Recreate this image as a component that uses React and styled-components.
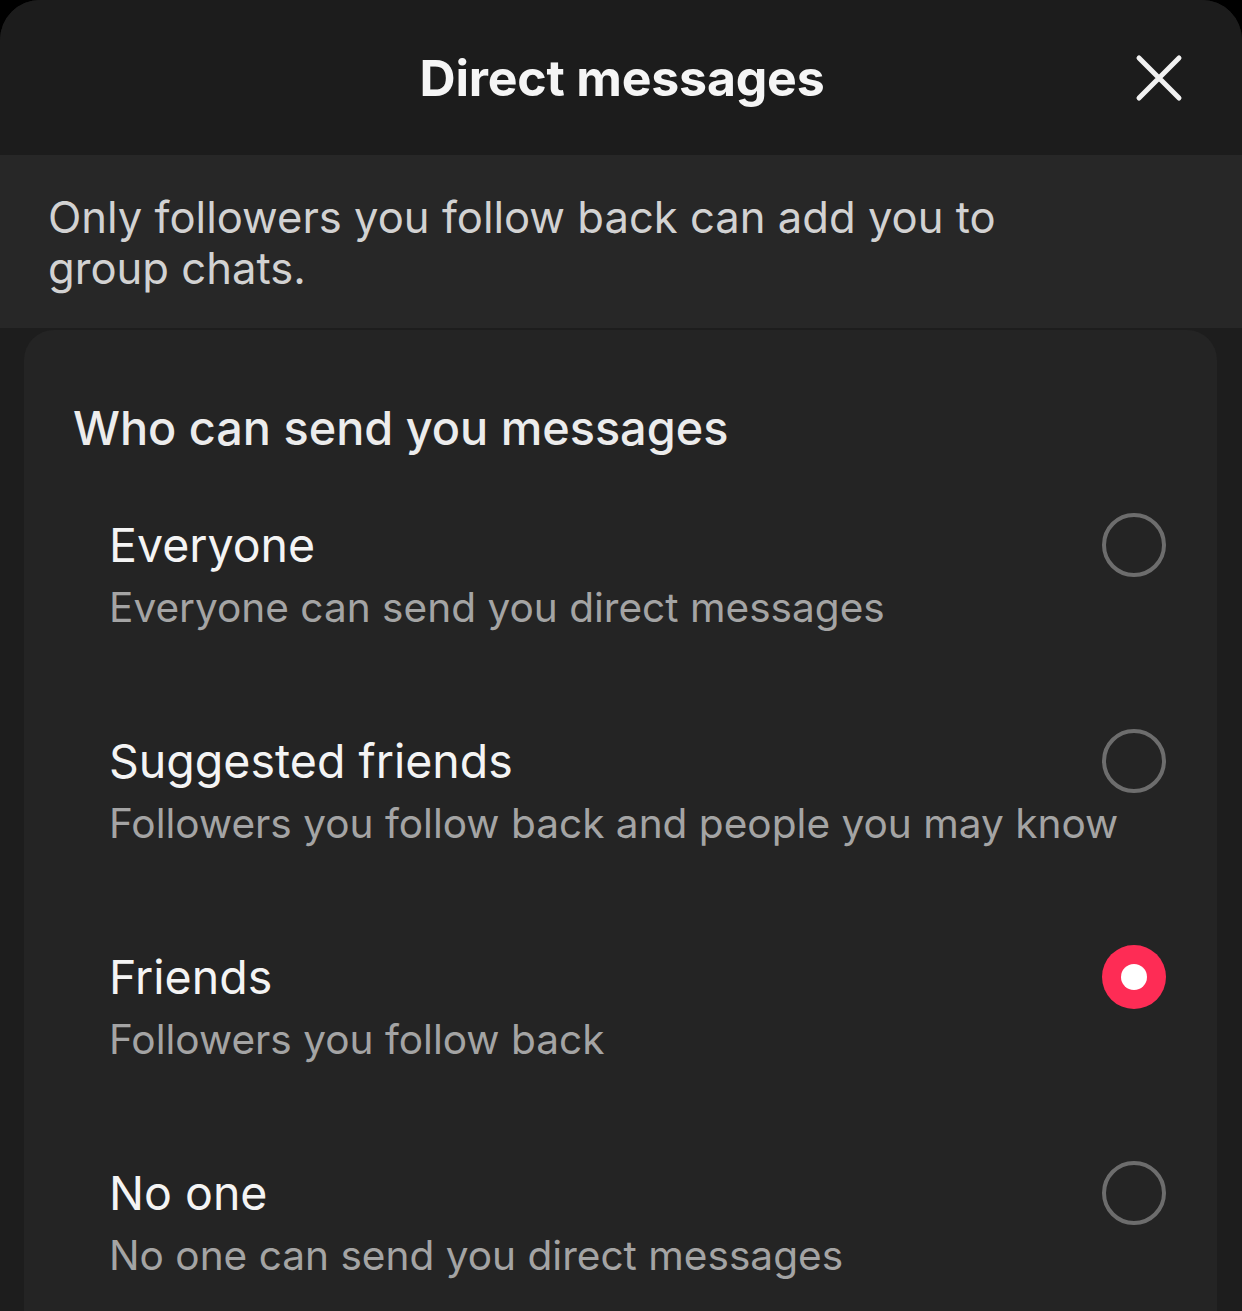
import styled, { createGlobalStyle } from "styled-components";

const GlobalStyle = createGlobalStyle`
  html, body {
    margin: 0;
    padding: 0;
    background: #000;
  }
  * {
    box-sizing: border-box;
  }
`;

const options = [
  {
    id: "everyone",
    title: "Everyone",
    description: "Everyone can send you direct messages",
  },
  {
    id: "suggested",
    title: "Suggested friends",
    description: "Followers you follow back and people you may know",
  },
  {
    id: "friends",
    title: "Friends",
    description: "Followers you follow back",
  },
  {
    id: "none",
    title: "No one",
    description: "No one can send you direct messages",
  },
];

const CloseIcon = () => (
  <svg width="48" height="48" viewBox="0 0 48 48" fill="none">
    <path
      d="M4 4 L44 44 M44 4 L4 44"
      stroke="#f2f2f2"
      strokeWidth="5"
      strokeLinecap="round"
    />
  </svg>
);

const OptionRow = ({ option, selected }) => (
  <Row>
    <OptionTitle>{option.title}</OptionTitle>
    <Radio $selected={selected}>{selected && <RadioDot />}</Radio>
    <OptionDescription>{option.description}</OptionDescription>
  </Row>
);

export default function App() {
  const selected = "friends";

  return (
    <>
      <GlobalStyle />
      <Sheet>
        <Header>
          <span />
          <Title>Direct messages</Title>
          <CloseButton aria-label="Close">
            <CloseIcon />
          </CloseButton>
        </Header>
        <Notice>
          Only followers you follow back can add you to
          <br />
          group chats.
        </Notice>
        <Card>
          <SectionHeading>Who can send you messages</SectionHeading>
          <OptionList>
            {options.map((option) => (
              <OptionRow
                key={option.id}
                option={option}
                selected={option.id === selected}
              />
            ))}
          </OptionList>
        </Card>
      </Sheet>
    </>
  );
}

const Sheet = styled.div`
  height: 1311px;
  overflow: hidden;
  background: #1d1d1d;
  border-radius: 40px 40px 0 0;
  font-family: Inter, "Noto Sans", sans-serif;
  display: flex;
  flex-direction: column;
`;

const Header = styled.div`
  height: 155px;
  flex-shrink: 0;
  display: grid;
  grid-template-columns: 1fr auto 1fr;
  align-items: center;
  background: #1c1c1c;
  padding: 0 57px 0 57px;
`;

const Title = styled.h1`
  margin: 0;
  font-size: 50px;
  line-height: 60px;
  font-weight: 700;
  color: #f5f5f5;
  letter-spacing: -0.2px;
  padding-left: 2px;
`;

const CloseButton = styled.button`
  justify-self: end;
  display: flex;
  align-items: center;
  justify-content: center;
  width: 48px;
  height: 48px;
  padding: 0;
  border: none;
  background: none;
  cursor: pointer;
  margin-right: 2px;
`;

const Notice = styled.div`
  height: 173px;
  flex-shrink: 0;
  background: #272727;
  padding: 37px 48px 0;
  font-size: 43.6px;
  line-height: 51px;
  color: #d2d2d2;
`;

const Card = styled.section`
  margin: 2px 25px 0 24px;
  flex: 1;
  background: #242424;
  border-radius: 30px 30px 0 0;
  padding: 70px 51px 0 49px;
`;

const SectionHeading = styled.h2`
  margin: 0;
  font-size: 46.8px;
  line-height: 56px;
  font-weight: 500;
  color: #ececec;
`;

const OptionList = styled.div`
  display: flex;
  flex-direction: column;
  gap: 102px;
  margin-top: 62px;
  padding-left: 36px;
`;

const Row = styled.div`
  display: grid;
  grid-template-columns: 1fr 64px;
  grid-template-rows: 54px auto;
  row-gap: 12px;
  cursor: pointer;
`;

const OptionTitle = styled.div`
  grid-column: 1;
  grid-row: 1;
  font-size: 46.5px;
  line-height: 54px;
  color: #f4f4f4;
`;

const OptionDescription = styled.div`
  grid-column: 1 / span 2;
  grid-row: 2;
  font-size: 40.6px;
  line-height: 48px;
  color: #a4a4a4;
  white-space: nowrap;
`;

const Radio = styled.div`
  grid-column: 2;
  grid-row: 1;
  align-self: center;
  width: 64px;
  height: 64px;
  border-radius: 50%;
  border: ${({ $selected }) => ($selected ? "none" : "4px solid #6d6d6d")};
  background: ${({ $selected }) => ($selected ? "#fe2c55" : "transparent")};
  display: flex;
  align-items: center;
  justify-content: center;
`;

const RadioDot = styled.span`
  width: 26px;
  height: 26px;
  border-radius: 50%;
  background: #fff;
`;
